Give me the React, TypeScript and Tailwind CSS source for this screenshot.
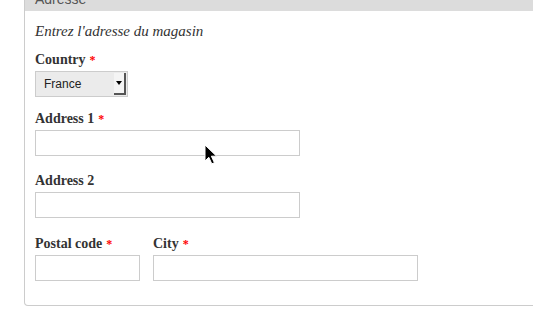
import type { ReactNode } from 'react'

const serif = "font-['Liberation_Serif','Times_New_Roman',serif]"

function Label({ children, req }: { children: ReactNode; req?: boolean }) {
  return (
    <div className={`${serif} text-[14px] font-bold text-[#333] leading-[14px] mb-[4px]`}>
      {children}
      {req && <span className="text-[#f00] text-[12px] ml-[4px]">*</span>}
    </div>
  )
}

function Field({ w }: { w: string }) {
  return <div className={`${w} h-[26px] border border-[#cccccc] bg-white`} />
}

function Cursor() {
  return (
    <svg className="absolute left-[204px] top-[144px]" width="15" height="21" viewBox="0 0 15 21">
      <path d="M1 1 L1 17 L4.8 13.3 L7.8 19.8 L10.4 18.7 L7.4 12.2 L12.6 12.2 Z" fill="#000" stroke="#fff" strokeWidth="1" strokeLinejoin="round" />
    </svg>
  )
}

export default function App() {
  return (
    <div className="relative w-[533px] h-[310px] bg-white overflow-hidden">
      <div className="ml-[24px] w-[520px] border border-t-0 border-[#cccccc] rounded-b-[4px]">
        <div className="h-[11px] bg-[#dcdcdc] overflow-hidden">
          <div className="mt-[-9px] ml-[10px] font-['Liberation_Sans',sans-serif] text-[14px] leading-[16px] text-[#555]">Adresse</div>
        </div>
        <div className="pl-[10px] pt-[11px] pb-[24px]">
          <div className={`${serif} italic text-[15px] leading-[18px] text-[#333] mb-[13px]`}>Entrez l'adresse du magasin</div>

          <Label req>Country</Label>
          <div className="w-[93px] h-[26px] flex items-center border border-[#cccccc] bg-[#ebebeb]">
            <span className="flex-1 pl-[8px] font-['Liberation_Sans',sans-serif] text-[12px] text-[#222]">France</span>
            <span className="w-[12px] h-[22px] mr-[1px] bg-[#f4f4f4] border-r-2 border-b-2 border-[#555] flex items-center justify-center">
              <svg width="6" height="4" viewBox="0 0 6 4"><path d="M0 0 H6 L3 4 Z" fill="#000" /></svg>
            </span>
          </div>

          <div className="mt-[15px]">
            <Label req>Address 1</Label>
            <Field w="w-[265px]" />
          </div>
          <div className="mt-[18px]">
            <Label>Address 2</Label>
            <Field w="w-[265px]" />
          </div>
          <div className="mt-[19px] flex gap-[13px]">
            <div>
              <Label req>Postal code</Label>
              <Field w="w-[105px]" />
            </div>
            <div>
              <Label req>City</Label>
              <Field w="w-[265px]" />
            </div>
          </div>
        </div>
      </div>
      <Cursor />
    </div>
  )
}
